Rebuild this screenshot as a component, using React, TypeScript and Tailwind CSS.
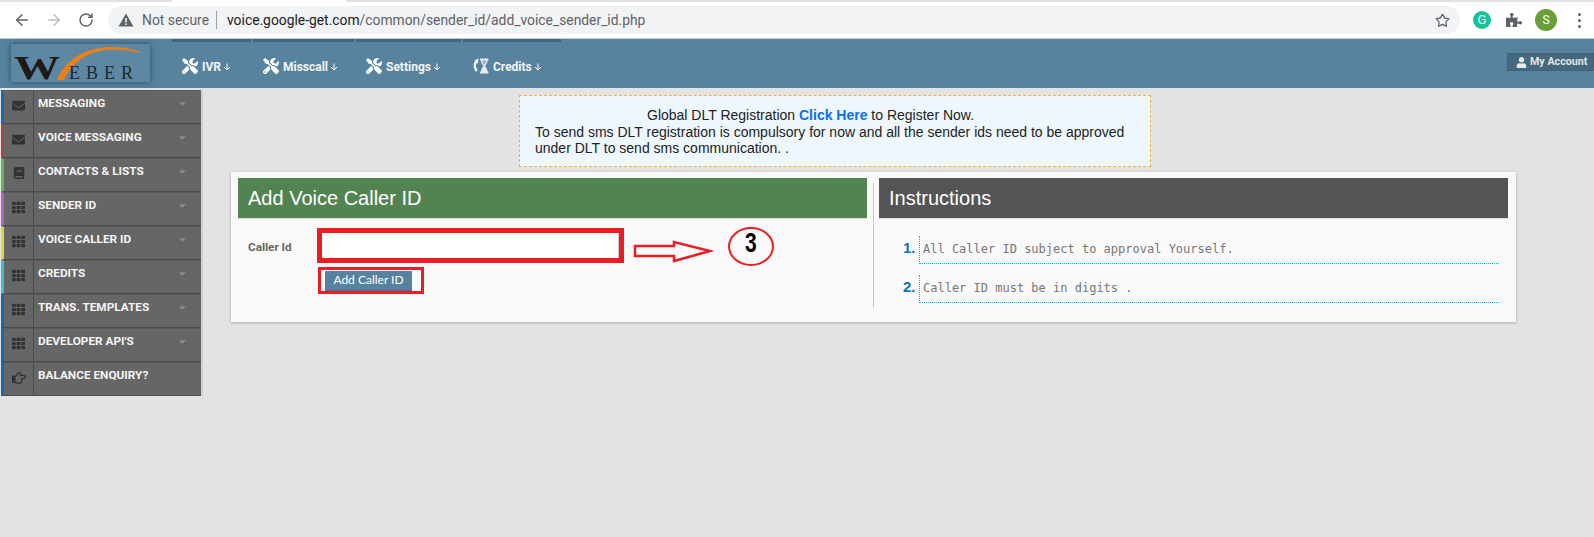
import React from "react";
import { ArrowLeft, ArrowRight, RotateCw, Star } from "lucide-react";
import { FaTools, FaUser, FaEnvelope, FaBook, FaTh, FaRegHandPointRight, FaPuzzlePiece, FaCaretDown } from "react-icons/fa";

const Down = () => (
  <svg width="8" height="8" viewBox="0 0 8 8" className="ml-[2px] mt-[1px]" fill="none" stroke="#fff" strokeWidth="1">
    <path d="M4 0.5V7M1 4l3 3 3-3" />
  </svg>
);

const CreditIcon = () => (
  <svg width="16" height="16" viewBox="0 0 16 16" fill="none">
    <path d="M3.6 3C1.4 5.5 1 9.5 3.8 13" stroke="#fff" strokeWidth="2.4" />
    <path d="M5.4 0.5L5 5.4 1.6 2.6z" fill="#fff" />
    <path d="M7 .5h8.5v2h-1C14.5 5.5 12.6 7 12 8c.6 1 2.5 2.5 2.5 5.5h1v2H7v-2h1C8 10.5 9.9 9 10.5 8 9.9 7 8 5.5 8 2.5H7z" fill="#e6ecf0" />
    <path d="M9.4 2.5h3.7c0 2-1.2 3.4-1.85 4.2C10.6 5.9 9.4 4.5 9.4 2.5z" fill="#8fa9ba" />
  </svg>
);

const Logo = () => (
  <svg width="139" height="38" viewBox="0 0 139 38" className="block overflow-visible">
    <text x="3" y="35" fontFamily="Liberation Serif" fontWeight="700" fontSize="34" fill="#1d1a18" textLength="46" lengthAdjust="spacingAndGlyphs">W</text>
    <path d="M46 36C52 20 70 3 100 3c15 0 26 3 32 6-14-3-27-4-37-3C75 8 60 20 53 36z" fill="#ea8017" />
    <text x="58" y="35" fontFamily="Liberation Serif" fontSize="18" fill="#22282c" textLength="64">EBER</text>
  </svg>
);

const navItems = [
  { label: "IVR", w: "w-[79px]", icon: <FaTools size={16} color="#fff" /> },
  { label: "Misscall", w: "w-[101px]", icon: <FaTools size={16} color="#fff" /> },
  { label: "Settings", w: "w-[105px]", icon: <FaTools size={16} color="#fff" /> },
  { label: "Credits", w: "w-[98px]", icon: <CreditIcon /> },
];

const menu = [
  { label: "MESSAGING", c: "border-l-[#0a6ebd]", icon: <FaEnvelope size={13} />, caret: true },
  { label: "VOICE MESSAGING", c: "border-l-[#a94442]", icon: <FaEnvelope size={13} />, caret: true },
  { label: "CONTACTS & LISTS", c: "border-l-[#5cb85c]", icon: <FaBook size={12} />, caret: true },
  { label: "SENDER ID", c: "border-l-[#b35fd0]", icon: <FaTh size={13} />, caret: true },
  { label: "VOICE CALLER ID", c: "border-l-[#e3d33c]", icon: <FaTh size={13} />, caret: true },
  { label: "CREDITS", c: "border-l-[#3bbfe0]", icon: <FaTh size={13} />, caret: true },
  { label: "TRANS. TEMPLATES", c: "border-l-[#0a6ebd]", icon: <FaTh size={13} />, caret: true },
  { label: "DEVELOPER API'S", c: "border-l-[#0a6ebd]", icon: <FaTh size={13} />, caret: true },
  { label: "BALANCE ENQUIRY?", c: "border-l-[#0a6ebd]", icon: <FaRegHandPointRight size={14} />, caret: false },
];

const instructions = ["All Caller ID subject to approval Yourself.", "Caller ID must be in digits ."];

export default function App() {
  return (
    <div className="h-[537px] w-[1594px] overflow-hidden bg-[#e3e3e3] font-['Liberation_Sans',sans-serif]">
      {/* browser chrome */}
      <div className="h-[39px] bg-white border-b border-b-[#c4cdd3]">
        <div className="flex h-[2px]">
          <div className="w-[172px] bg-[#dee1e6]" />
          <div className="w-[174px] bg-white" />
          <div className="flex-1 bg-[#dee1e6]" />
        </div>
        <div className="flex h-[36px] items-center">
          <ArrowLeft size={18} color="#5f6368" className="ml-[13px]" strokeWidth={2} />
          <ArrowRight size={18} color="#b9bcc0" className="ml-[14px]" strokeWidth={2} />
          <RotateCw size={16} color="#5f6368" className="ml-[15px]" strokeWidth={2.2} />
          <div className="ml-[14px] flex h-[28px] w-[1352px] items-center rounded-[14px] bg-[#f1f3f4] font-['Roboto',sans-serif] text-[13.85px]">
            <svg width="16" height="14" viewBox="0 0 16 14" className="ml-[10px]">
              <path d="M8 0.5L15.5 13.5H.5z" fill="#5f6368" />
              <path d="M7.2 5h1.6v4.5H7.2zM7.2 10.4h1.6V12H7.2z" fill="#f1f3f4" />
            </svg>
            <span className="ml-[8px] text-[#5f6368]">Not secure</span>
            <span className="ml-[7px] h-[18px] w-px bg-[#9aa0a6]" />
            <span className="ml-[10px] text-[#202124]">voice.google-get.com<span className="text-[#5f6368]">/common/sender_id/add_voice_sender_id.php</span></span>
            <Star size={15} color="#5f6368" className="ml-auto mr-[10px]" strokeWidth={2} />
          </div>
          <div className="ml-[13px] flex h-[18px] w-[18px] items-center justify-center rounded-full bg-[#15c39a] font-['Roboto',sans-serif] text-[13px] text-white">G</div>
          <FaPuzzlePiece size={16} color="#5f6368" className="ml-[15px]" />
          <div className="ml-[13px] flex h-[22px] w-[22px] items-center justify-center rounded-full bg-[#689f38] font-['Roboto',sans-serif] text-[12px] text-white">S</div>
          <div className="ml-[21px] flex flex-col gap-[3px]">
            <span className="h-[3px] w-[3px] rounded-full bg-[#5f6368]" />
            <span className="h-[3px] w-[3px] rounded-full bg-[#5f6368]" />
            <span className="h-[3px] w-[3px] rounded-full bg-[#5f6368]" />
          </div>
        </div>
      </div>

      {/* app header */}
      <div className="flex h-[49px] bg-[#58839f]">
        <div className="ml-[11px] mt-[5px] h-[38px] w-[139px] bg-[#5d87a3] shadow-[0_0_6px_rgba(30,60,80,0.8)]">
          <Logo />
        </div>
        <div className="ml-[22px] flex gap-[2px]">
          {navItems.map((n) => (
            <div key={n.label} className={`${n.w} flex h-[49px] items-center border-t-[3px] border-t-[#40667f] pl-[10px] pt-[2px]`}>
              {n.icon}
              <span className="ml-[4px] mt-[1px] font-['Roboto',sans-serif] text-[12px] font-bold text-[#f2f5f7]">{n.label}</span>
              <Down />
            </div>
          ))}
        </div>
        <div className="ml-auto mt-[14px] flex h-[18px] w-[87px] items-center border border-[#3f627a] bg-[#44697f] pl-[8px]">
          <FaUser size={11} color="#e8e8e8" />
          <span className="ml-[3px] font-['Roboto',sans-serif] text-[10.7px] font-bold text-[#e3e3e3]">My Account</span>
        </div>
      </div>

      <div className="flex">
        {/* sidebar */}
        <div className="ml-px mt-[2px] w-[202px] border-r-2 border-r-[#cfcfcf]">
          {menu.map((m) => (
            <div key={m.label} className={`flex h-[34px] border-l-[3px] ${m.c} border-b border-b-[#4b4b4b] border-t border-t-[#5a5a5a] bg-[#666666]`}>
              <div className="flex w-[30px] items-start justify-center border-r border-r-[#4b4b4b] pt-[8px] text-[#333333]">
                {m.icon}
              </div>
              <span className="ml-[4px] mt-[4px] font-['Roboto',sans-serif] text-[11.8px] font-bold text-[#f4f4f4]">{m.label}</span>
              {m.caret && <FaCaretDown size={11} color="#8a8a8a" className="ml-auto mr-[13px] mt-[7px]" />}
            </div>
          ))}
        </div>

        {/* main */}
        <div className="flex-1 pt-[7px]">
          <div className="ml-[316px] h-[72px] w-[632px] border border-dashed border-[#f0b040] bg-[#eef7fe] pl-[15px] pr-[10px] pt-[11px] text-[14px] leading-[16.5px] text-[#222222]">
            <div className="ml-[112px]">Global DLT Registration <a className="font-bold text-[#0a6ff0]">Click Here</a> to Register Now.</div>
            <div>To send sms DLT registration is compulsory for now and all the sender ids need to be approved under DLT to send sms communication. .</div>
          </div>

          <div className="ml-[28px] mt-[5px] flex h-[150px] w-[1285px] bg-[#f9f9f9] pl-[7px] pr-[8px] pt-[6px] shadow-[0_1px_3px_rgba(0,0,0,0.25)]">
            <div className="w-[629px]">
              <div className="flex h-[41px] items-center border-b border-b-[#dddddd] bg-[#528452] pl-[10px] text-[20px] text-white">Add Voice Caller ID</div>
              <div className="mt-[9px] flex">
                <div className="ml-[10px] mt-[11px] w-[69px] font-['Roboto',sans-serif] text-[11.7px] font-bold text-[#666666]">Caller Id</div>
                <div>
                  <div className="flex items-start">
                    <div className="h-[35px] w-[307px] border-[5px] border-[#ed1c24] bg-white">
                      <input className="block h-[25px] w-full border-r border-r-[#cccccc] bg-white outline-none" />
                    </div>
                    <svg width="80" height="24" viewBox="0 0 80 24" className="ml-[9px] mt-[12px]" fill="none" stroke="#ed1c24" strokeWidth="2.5">
                      <path d="M2 6h39V2l36 9-36 10v-5H2z" />
                    </svg>
                    <div className="ml-[15px] -mt-[1px] flex h-[39px] w-[46px] items-center justify-center rounded-[50%] border-[2px] border-[#ed1c24] pb-[7px] font-['Liberation_Sans',sans-serif] text-[28px] font-bold leading-none text-black">
                      <span className="scale-x-75">3</span>
                    </div>
                  </div>
                  <div className="ml-[1px] mt-[1px] flex h-[27px] w-[106px] items-center border-[3px] border-[#ed1c24] pl-[4px]">
                    <button className="h-[20px] w-[87px] rounded-[1px] border-b border-b-[#3f6a85] bg-[#55829f] font-['Lato',sans-serif] text-[12px] text-white">Add Caller ID</button>
                  </div>
                </div>
              </div>
            </div>
            <div className="ml-[6px] mr-[5px] mt-[5px] h-[125px] w-px bg-[#c8c8c8]" />
            <div className="flex-1">
              <div className="flex h-[41px] items-center border-b border-b-[#dddddd] bg-[#555555] pl-[10px] text-[20px] text-white">Instructions</div>
              <div className="mt-[17px] flex flex-col gap-[11px] pl-[24px] pr-[9px]">
                {instructions.map((t, i) => (
                  <div key={t} className="flex">
                    <span className="w-[16px] pt-[2px] text-[15px] font-bold leading-[20px] text-[#0b76bd]">{i + 1}.</span>
                    <div className="flex h-[28px] flex-1 items-center border-b border-l border-dotted border-[#29a9e0] pb-[2px] pl-[3px] font-['DejaVu_Sans_Mono',monospace] text-[12px] text-[#777777]">{t}</div>
                  </div>
                ))}
              </div>
            </div>
          </div>
        </div>
      </div>
    </div>
  );
}
